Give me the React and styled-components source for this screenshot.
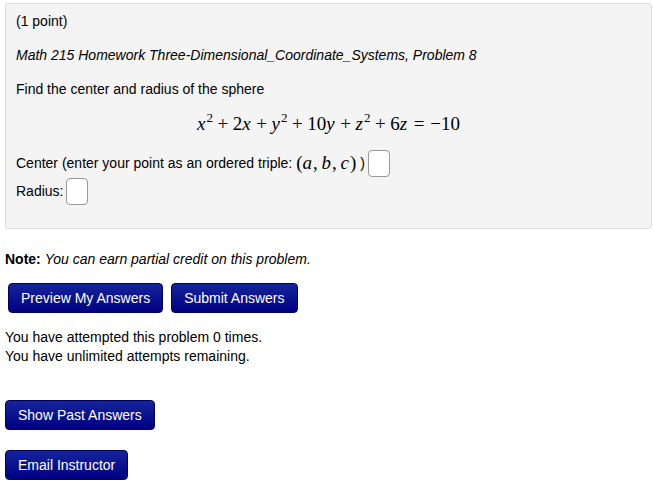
import React from 'react';
import styled, { createGlobalStyle } from 'styled-components';

const GlobalStyle = createGlobalStyle`
  body {
    margin: 0;
    background: #fff;
    font-family: "Liberation Sans", Arial, sans-serif;
    font-size: 14px;
    color: #000;
  }
`

const PageStyled = styled.div`
  padding: 3px 1px 20px 5px;
`
const ProblemBoxStyled = styled.div`
  background: #f4f4f4;
  border: 1px solid #dcdcdc;
  border-radius: 4px;
  padding: 7px 10px 23px 10px;
`
const LineStyled = styled.p`
  margin: 0 0 ${(p) => p.gap ?? 14}px;
  line-height: 20px;
  font-style: ${(p) => (p.italic ? 'italic' : 'normal')};
`
const EquationStyled = styled.div`
  text-align: center;
  font-family: "Liberation Serif", "Times New Roman", serif;
  font-size: 19px;
  line-height: 24px;
  margin: 0 0 13px;
`
const MathVar = styled.i`
  font-style: italic;
  padding-right: 1px;
`
const Op = styled.span`
  padding: 0 ${(p) => (p.rel ? 0.3 : 0.24)}em;
`
const Sup = styled.sup`
  font-size: 13px;
  line-height: 0;
  vertical-align: 8px;
`
const InlineMath = styled.span`
  font-family: "Liberation Serif", "Times New Roman", serif;
  font-size: 19px;
`
const AnswerRowStyled = styled.div`
  display: flex;
  align-items: center;
  height: 28px;
`
const AnswerBox = styled.span`
  display: inline-block;
  width: 20px;
  height: 25px;
  margin-left: 3px;
  background: #fff;
  border: 1px solid #999;
  border-radius: 4px;
`
const NoteStyled = styled.p`
  margin: 20px 0 14px;
  line-height: 20px;
`
const ButtonRowStyled = styled.div`
  display: flex;
  gap: 8px;
  padding-left: 3px;
`
const ButtonStyled = styled.button`
  font-family: "Liberation Sans", Arial, sans-serif;
  font-size: 14px;
  color: #fff;
  line-height: 16px;
  padding: 6px 12px;
  border: 1px solid #00005e;
  border-radius: 4px;
  background: linear-gradient(#15249a, #000082);
  cursor: pointer;
`
const AttemptsStyled = styled.div`
  margin-top: 15px;
  line-height: 19px;
`
const StackButtonStyled = styled.div`
  margin-top: ${(p) => p.top}px;
`

const Equation = () => (
  <EquationStyled>
    <MathVar>x</MathVar><Sup>2</Sup><Op>+</Op>2<MathVar>x</MathVar><Op>+</Op><MathVar>y</MathVar><Sup>2</Sup><Op>+</Op>10<MathVar>y</MathVar><Op>+</Op><MathVar>z</MathVar><Sup>2</Sup><Op>+</Op>6<MathVar>z</MathVar><Op rel>=</Op>−10
  </EquationStyled>
)

const App = () => {
  return (
    <>
      <GlobalStyle />
      <PageStyled>
        <ProblemBoxStyled>
          <LineStyled>(1 point)</LineStyled>
          <LineStyled italic>Math 215 Homework Three-Dimensional_Coordinate_Systems, Problem 8</LineStyled>
          <LineStyled gap={13}>Find the center and radius of the sphere</LineStyled>
          <Equation />
          <AnswerRowStyled>
            Center (enter your point as an ordered triple:&nbsp;
            <InlineMath>(<MathVar>a</MathVar>,&thinsp;<MathVar>b</MathVar>,&thinsp;<MathVar>c</MathVar>)</InlineMath>&nbsp;)
            <AnswerBox />
          </AnswerRowStyled>
          <AnswerRowStyled>
            Radius:
            <AnswerBox />
          </AnswerRowStyled>
        </ProblemBoxStyled>
        <NoteStyled><b>Note:</b> <i>You can earn partial credit on this problem.</i></NoteStyled>
        <ButtonRowStyled>
          <ButtonStyled>Preview My Answers</ButtonStyled>
          <ButtonStyled>Submit Answers</ButtonStyled>
        </ButtonRowStyled>
        <AttemptsStyled>
          You have attempted this problem 0 times.<br />
          You have unlimited attempts remaining.
        </AttemptsStyled>
        <StackButtonStyled top={34}>
          <ButtonStyled>Show Past Answers</ButtonStyled>
        </StackButtonStyled>
        <StackButtonStyled top={20}>
          <ButtonStyled>Email Instructor</ButtonStyled>
        </StackButtonStyled>
      </PageStyled>
    </>
  )
}

export default App
